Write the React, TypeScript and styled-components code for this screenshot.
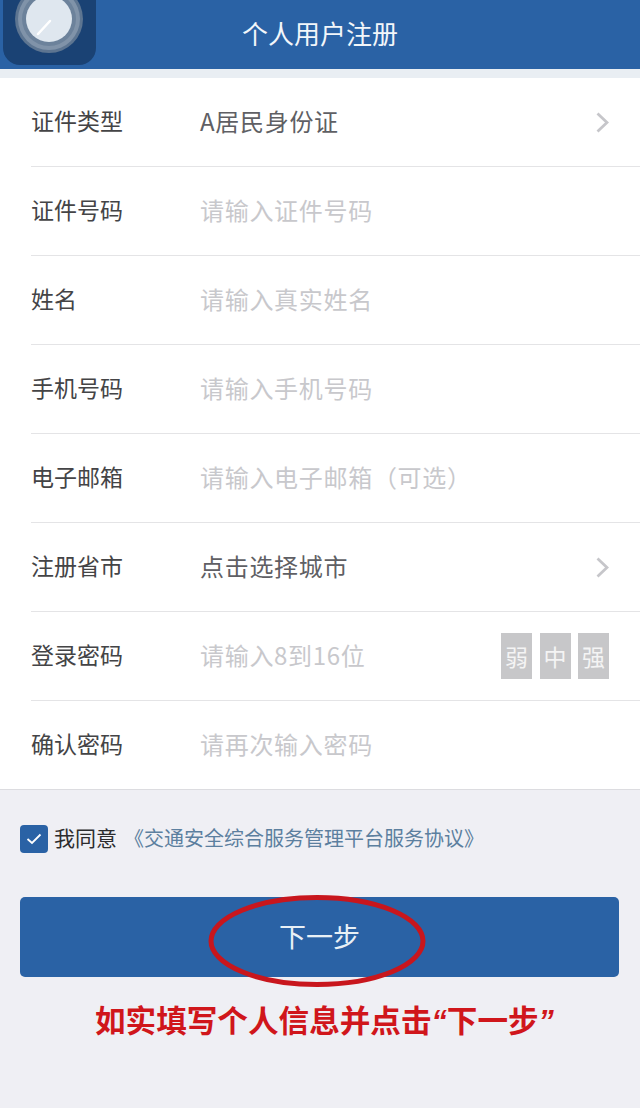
import * as React from 'react';
import styled, { createGlobalStyle } from 'styled-components';

const BLUE = '#2a62a5';
const CJK = '"Noto Sans CJK SC", "Noto Sans", sans-serif';

const rows = [
  { label: '证件类型', value: 'A居民身份证', arrow: true },
  { label: '证件号码', hint: '请输入证件号码' },
  { label: '姓名', hint: '请输入真实姓名' },
  { label: '手机号码', hint: '请输入手机号码' },
  { label: '电子邮箱', hint: '请输入电子邮箱（可选）' },
  { label: '注册省市', value: '点击选择城市', arrow: true },
  { label: '登录密码', hint: '请输入8到16位', strength: true },
  { label: '确认密码', hint: '请再次输入密码', last: true },
];

function Chevron() {
  return (
    <ChevronIcon viewBox="0 0 13 21" fill="none" stroke="#c6c6ca" strokeWidth="2.8">
      <path d="M1.500 1.500l9.500 9-9.500 9" />
    </ChevronIcon>
  );
}

function AppIcon() {
  return (
    <Floating>
      <svg width="96" height="66" viewBox="0 0 96 66">
        <rect x="3" y="-30" width="93" height="95" rx="17" fill="#1a4274" />
        <circle cx="49" cy="19" r="34" fill="#5d7591" />
        <circle cx="49" cy="19" r="31" fill="#8093a9" />
        <circle cx="49" cy="19" r="27" fill="#6c829b" />
        <circle cx="49" cy="19" r="23" fill="#dfe7ef" />
        <path d="M50 21L38 34" stroke="#fff" strokeWidth="2.5" strokeLinecap="round" />
      </svg>
    </Floating>
  );
}

export default function App() {
  return (
    <Page>
      <GlobalStyle />
      <Header>个人用户注册</Header>
      <AppIcon />
      <Band />
      <Form>
        {rows.map((r) => (
          <Row key={r.label} $last={r.last}>
            <RowInner $last={r.last}>
              <Label>{r.label}</Label>
              {r.value ? <Value>{r.value}</Value> : <Hint>{r.hint}</Hint>}
              {r.arrow && <Chevron />}
              {r.strength && (
                <Strength>
                  <StrengthBox>弱</StrengthBox>
                  <StrengthBox>中</StrengthBox>
                  <StrengthBox>强</StrengthBox>
                </Strength>
              )}
            </RowInner>
          </Row>
        ))}
      </Form>
      <Footer>
        <Agree>
          <CheckBox>
            <svg width="16" height="12" viewBox="0 0 16 12" fill="none" stroke="#fff" strokeWidth="1.8">
              <path d="M1.500 6l4.500 4L14.500 1.500" />
            </svg>
          </CheckBox>
          <AgreeText>我同意</AgreeText>
          <AgreeLink>《交通安全综合服务管理平台服务协议》</AgreeLink>
        </Agree>
        <NextButton>
          <ButtonText>下一步</ButtonText>
          <Ring viewBox="0 0 218 92" fill="none">
            <ellipse cx="109" cy="46" rx="106" ry="43.500" stroke="#c8161d" strokeWidth="5" />
          </Ring>
        </NextButton>
        <Note>
          如实填写个人信息并点击<Quote>“</Quote>下一步<Quote>”</Quote>
        </Note>
      </Footer>
    </Page>
  );
}

const GlobalStyle = createGlobalStyle`
  html, body {
    margin: 0;
    padding: 0;
    background: #efeff4;
  }
`;

const Page = styled.div`
  position: relative;
  width: 640px;
  height: 1108px;
  overflow: hidden;
  background: #efeff4;
  font-family: ${CJK};
`;

const Header = styled.div`
  display: flex;
  align-items: center;
  justify-content: center;
  box-sizing: border-box;
  height: 69px;
  padding-bottom: 4px;
  background: ${BLUE};
  color: #f2f6fa;
  font-size: 26px;
`;

const Floating = styled.div`
  position: absolute;
  top: 0;
  left: 0;
  line-height: 0;
`;

const Band = styled.div`
  height: 9px;
  background: #e9eef3;
`;

const Form = styled.div`
  background: #fff;
  border-bottom: 1px solid #dcdce0;
`;

const Row = styled.div<{ $last?: boolean }>`
  height: ${(p) => (p.$last ? '88px' : '89px')};
  padding-left: 31px;
`;

const RowInner = styled.div<{ $last?: boolean }>`
  display: flex;
  align-items: center;
  box-sizing: border-box;
  height: 100%;
  padding: 0 31px 4px 0;
  border-bottom: ${(p) => (p.$last ? 'none' : '1px solid #e4e4e6')};
`;

const Label = styled.div`
  width: 169px;
  flex: none;
  color: #444446;
  font-size: 23px;
`;

const Value = styled.div`
  flex: 1;
  color: #5f5f64;
  font-size: 24px;
  letter-spacing: 0.7px;
`;

const Hint = styled.div`
  flex: 1;
  color: #c8c8cc;
  font-size: 24px;
  letter-spacing: 0.7px;
`;

const ChevronIcon = styled.svg`
  width: 13px;
  height: 21px;
  margin-top: 4px;
`;

const Strength = styled.div`
  display: flex;
  gap: 7.5px;
  margin-top: 4px;
`;

const StrengthBox = styled.div`
  display: flex;
  align-items: center;
  justify-content: center;
  width: 31px;
  height: 46px;
  background: #c7c7c9;
  color: #f4f4f4;
  font-size: 23px;
`;

const Footer = styled.div`
  padding: 35px 20px 0;
`;

const Agree = styled.div`
  display: flex;
  align-items: center;
  height: 28px;
`;

const CheckBox = styled.div`
  display: flex;
  align-items: center;
  justify-content: center;
  width: 28px;
  height: 28px;
  border-radius: 4px;
  background: ${BLUE};
`;

const AgreeText = styled.span`
  margin: 0 0 4px 6px;
  color: #2c2c2e;
  font-size: 21px;
`;

const AgreeLink = styled.span`
  margin: 0 0 4px 7px;
  color: #5c7f9f;
  font-size: 20px;
`;

const NextButton = styled.div`
  position: relative;
  display: flex;
  align-items: center;
  justify-content: center;
  width: 599px;
  height: 80px;
  margin-top: 44px;
  border-radius: 5px;
  background: ${BLUE};
  color: #e8f0f6;
`;

const ButtonText = styled.span`
  margin-bottom: 3px;
  font-size: 27px;
`;

const Ring = styled.svg`
  position: absolute;
  left: 188px;
  top: -2px;
  width: 218px;
  height: 92px;
`;

const Note = styled.div`
  margin: 19px 0 0 75px;
  color: #d0161b;
  font-size: 30.6px;
  font-weight: 700;
  line-height: 46px;
  white-space: nowrap;
`;

const Quote = styled.span`
  font-family: "Liberation Sans", sans-serif;
  font-style: italic;
`;
